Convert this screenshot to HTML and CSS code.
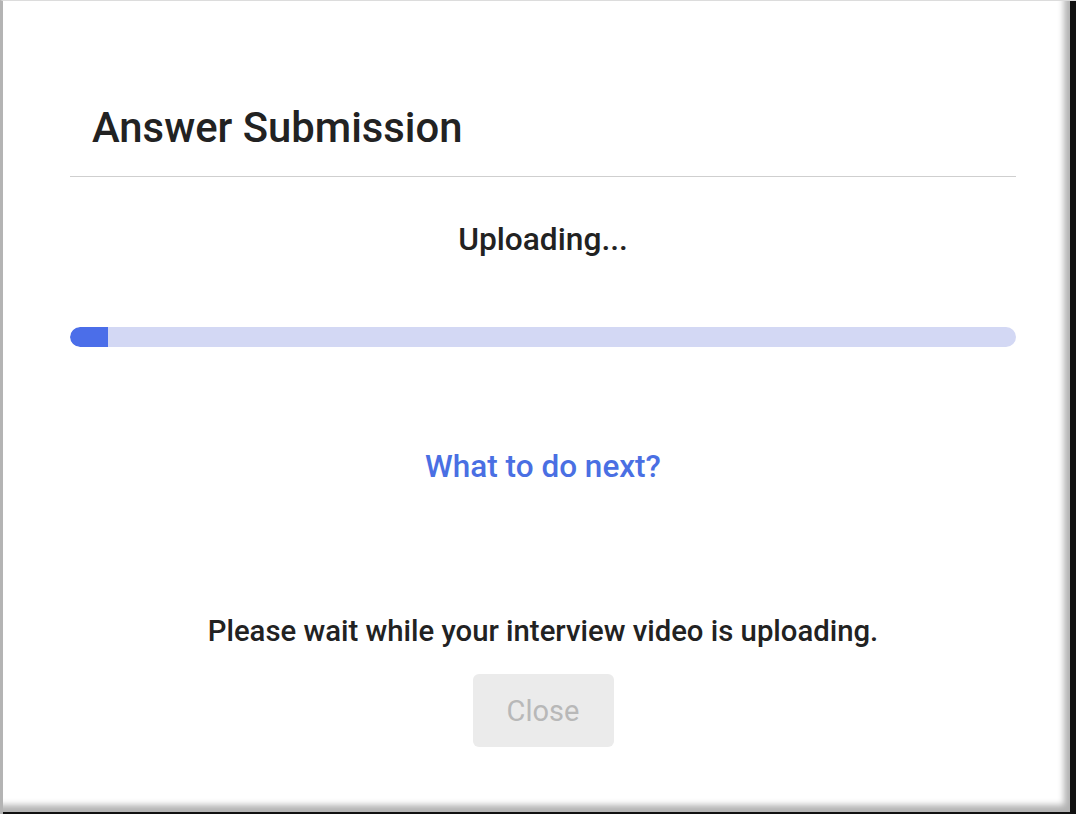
FILE: index.html
```html
<!DOCTYPE html>
<html>
<head>
<meta charset="utf-8">
<link rel="stylesheet" href="styles.css">
</head>
<body>
<div class="frame">
  <div class="dialog">
    <div class="header">
      <h1 class="title">Answer Submission</h1>
    </div>
    <div class="body">
      <div class="status">Uploading...</div>
      <div class="progress"><div class="progress-fill" style="width:38px"></div></div>
      <a class="next-link">What to do next?</a>
      <p class="wait">Please wait while your interview video is uploading.</p>
      <button class="close-btn" disabled>Close</button>
    </div>
  </div>
</div>
</body>
</html>
```
FILE: styles.css
```css
html, body {
  margin: 0;
  padding: 0;
  background: #fff;
}
body {
  font-family: Roboto, "Liberation Sans", Arial, sans-serif;
  color: #222;
}
.frame {
  width: 1076px;
  height: 814px;
  box-sizing: border-box;
  border-left: 3px solid #b4b4b4;
  border-top: 1px solid #dcdcdc;
  background: #fff;
  box-shadow: inset -6px -2px 0 #111, inset -12px -9px 6px rgba(0,0,0,0.3);
  overflow: hidden;
}
.dialog {
  padding: 0 60px 0 67px;
}
.header {
  padding: 102px 0 23px 22px;
  border-bottom: 1px solid #cfcfcf;
}
.title {
  margin: 0;
  font-size: 41.8px;
  line-height: 50px;
  font-weight: 500;
  color: #222;
}
.body {
  display: flex;
  flex-direction: column;
  align-items: center;
}
.status {
  margin-top: 45px;
  font-size: 31.7px;
  line-height: 36px;
  font-weight: 500;
  color: #222;
}
.progress {
  align-self: stretch;
  margin-top: 69px;
  height: 20px;
  border-radius: 10px;
  background: #d3d8f4;
  overflow: hidden;
}
.progress-fill {
  height: 100%;
  background: #4b6ee9;
  border-radius: 10px 0 0 10px;
}
.next-link {
  margin-top: 102px;
  font-size: 31.5px;
  line-height: 36px;
  font-weight: 500;
  color: #4a6fe3;
  cursor: pointer;
}
.wait {
  margin: 129px 0 0;
  font-size: 29.3px;
  line-height: 34px;
  font-weight: 500;
  color: #222;
}
.close-btn {
  margin-top: 26px;
  width: 141px;
  height: 73px;
  border: none;
  border-radius: 6px;
  background: #ebebeb;
  color: #b8b8b8;
  font-family: Roboto, "Liberation Sans", Arial, sans-serif;
  font-size: 29px;
  font-weight: 400;
}
```
